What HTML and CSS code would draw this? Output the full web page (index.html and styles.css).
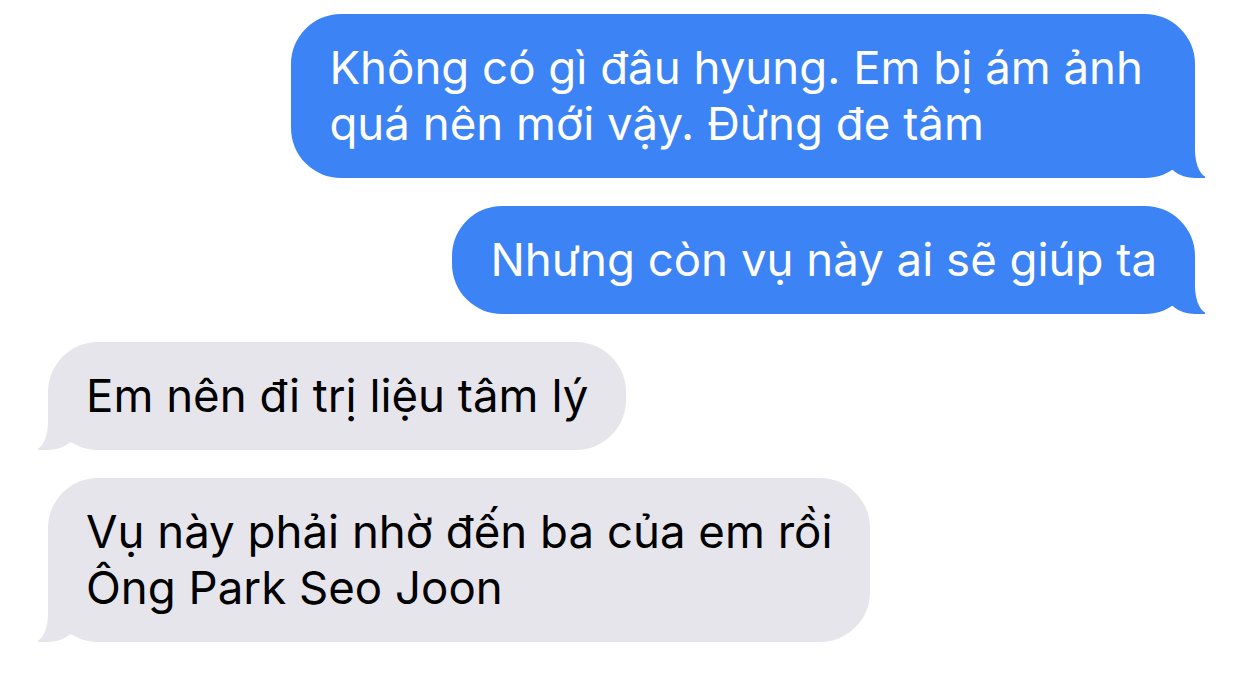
FILE: index.html
```
<!DOCTYPE html>
<html lang="vi">
<head>
  <meta charset="UTF-8" />
  <title>Tin nhắn</title>
  <link rel="stylesheet" href="styles.css">
</head>
<body>
  <div class="thread">
    <div class="bubble sent wide">Không có gì đâu hyung. Em bị ám ảnh<br>quá nên mới vậy. Đừng đe tâm</div>
    <div class="bubble sent">Nhưng còn vụ này ai sẽ giúp ta</div>
    <div class="bubble received">Em nên đi trị liệu tâm lý</div>
    <div class="bubble received">Vụ này phải nhờ đến ba của em rồi<br>Ông Park Seo Joon</div>
  </div>
</body>
</html>
```

FILE: styles.css
```
* { box-sizing: border-box; margin: 0; padding: 0; }

body {
  background: #fff;
  font-family: Inter, "Noto Sans", sans-serif;
  overflow: hidden;
}

.thread {
  display: flex;
  flex-direction: column;
  gap: 28px;
  padding: 14px 47px 0 48px;
}

.bubble {
  position: relative;
  width: fit-content;
  padding: 26px 38px;
  border-radius: 50px;
  font-size: 45.6px;
  line-height: 56px;
  white-space: nowrap;
}

/* wrapped bubble keeps the extra room on the right */
.bubble.wide {
  padding-right: 52px;
}

/* tails */
.bubble::before,
.bubble::after {
  content: "";
  position: absolute;
  bottom: 0;
  height: 50px;
}

.sent {
  align-self: flex-end;
  background: #3c83f6;
  color: #fff;
}

.sent::before {
  right: -10px;
  width: 40px;
  background: #3c83f6;
  border-bottom-left-radius: 30px 24px;
}

.sent::after {
  right: -40px;
  width: 40px;
  background: #fff;
  border-bottom-left-radius: 14px 28px;
}

.received {
  align-self: flex-start;
  background: #e6e5eb;
  color: #000;
}

.received::before {
  left: -10px;
  width: 40px;
  background: #e6e5eb;
  border-bottom-right-radius: 30px 24px;
}

.received::after {
  left: -40px;
  width: 40px;
  background: #fff;
  border-bottom-right-radius: 14px 28px;
}
```
